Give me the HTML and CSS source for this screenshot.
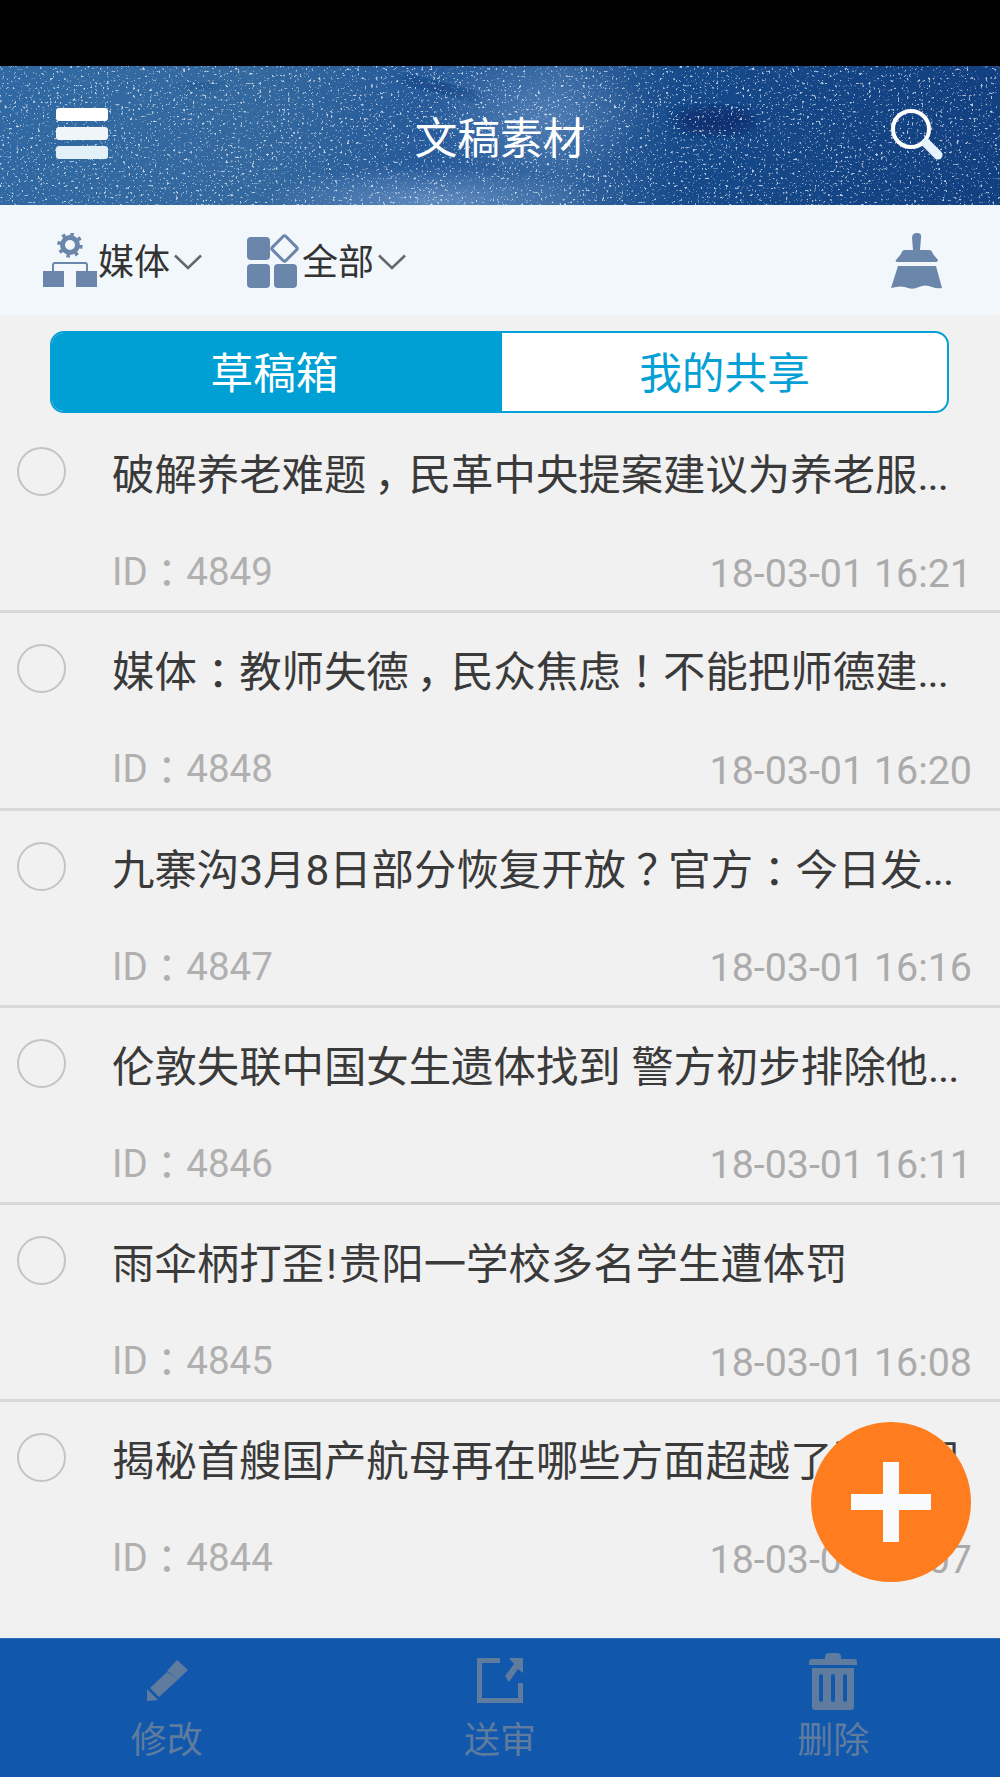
FILE: index.html
```html
<!DOCTYPE html>
<html lang="zh-CN">
<head>
<meta charset="utf-8">
<title>文稿素材</title>
<link rel="stylesheet" href="styles.css">
</head>
<body>
<div class="app">
  <div class="status"></div>
  <header class="header">
    <svg class="sky" width="1000" height="139" aria-hidden="true">
      <defs>
        <filter id="stars" x="0" y="0" width="100%" height="100%">
          <feTurbulence type="fractalNoise" baseFrequency="0.42" numOctaves="2" seed="11"/>
          <feColorMatrix type="matrix" values="0 0 0 0 1  0 0 0 0 1  0 0 0 0 1  4.500 4.500 0 0 -5.250"/>
        </filter>
        <filter id="blur"><feGaussianBlur stdDeviation="6"/></filter>
      </defs>
      <ellipse cx="440" cy="22" rx="42" ry="5" fill="#0e3a78" opacity=".7" filter="url(#blur)" transform="rotate(14 440 22)"/>
      <ellipse cx="715" cy="55" rx="40" ry="14" fill="#0a2c6c" opacity=".8" filter="url(#blur)"/>
      <ellipse cx="200" cy="20" rx="22" ry="3" fill="#0e3a78" opacity=".6" filter="url(#blur)"/>
      <rect width="1000" height="139" filter="url(#stars)" opacity=".7"/>
    </svg>
    <button class="hbtn menu" aria-label="菜单"><i></i><i></i><i></i></button>
    <h1 class="title">文稿素材</h1>
    <button class="hbtn search" aria-label="搜索">
      <svg width="56" height="56" viewBox="0 0 56 56">
        <circle cx="23" cy="21" r="18" fill="none" stroke="#fff" stroke-width="4"/>
        <path d="M38 35 L50 47" stroke="#e6f3fa" stroke-width="9" stroke-linecap="round"/>
      </svg>
    </button>
  </header>

  <div class="toolbar">
    <div class="filter">
      <svg class="ico-media" width="54" height="56" viewBox="0 0 54 56">
        <g fill="none" stroke="#6b86ab">
          <circle cx="27" cy="12" r="7.500" stroke-width="5"/>
          <circle cx="27" cy="12" r="11" stroke-width="3.500" stroke-dasharray="3.500 5.140"/>
          <path d="M10 40 V32 Q10 30 12 30 H42 Q44 30 44 32 V40" stroke-width="2"/>
        </g>
        <path d="M0 38h21v16H0zM33 38h21v16H33z" fill="#6b86ab"/>
      </svg>
      <span class="flabel">媒体</span>
      <svg class="chev" width="28" height="16" viewBox="0 0 28 16"><path d="M1 1.500 L14 14 L27 1.500" fill="none" stroke="#666" stroke-width="2.500"/></svg>
    </div>
    <div class="filter second">
      <svg class="ico-all" width="54" height="56" viewBox="0 0 54 56">
        <g fill="#6b86ab">
          <rect x="0" y="4" width="23" height="23" rx="4"/>
          <rect x="0" y="31" width="23" height="24" rx="4"/>
          <rect x="27" y="31" width="23" height="24" rx="4"/>
        </g>
        <rect x="28" y="6" width="19" height="19" rx="2" transform="rotate(45 37.500 15.500)" fill="none" stroke="#6b86ab" stroke-width="3"/>
      </svg>
      <span class="flabel">全部</span>
      <svg class="chev" width="28" height="16" viewBox="0 0 28 16"><path d="M1 1.500 L14 14 L27 1.500" fill="none" stroke="#666" stroke-width="2.500"/></svg>
    </div>
    <svg class="broom" width="52" height="56" viewBox="0 0 52 56">
      <path fill="#6b86ab" d="M21 5 Q21 0 26 0 Q31 0 30 5 L29 17 H38 Q41 17 42 21 L47 27 Q47 29 45 29 H6 Q4 29 5 27 L10 21 Q11 17 14 17 H22 Z"/>
      <path fill="#6b86ab" d="M7 33 H45 L51 55 Q46 56 41 54 Q34 51 28 54 Q22 57 17 55 Q11 52 0 55 Z"/>
    </svg>
  </div>

  <div class="tabs">
    <div class="tab on">草稿箱</div>
    <div class="tab">我的共享</div>
  </div>

  <main class="list">
    <article class="row">
      <span class="radio"></span>
      <div class="body">
        <div class="rtitle">破解养老难题<span class="pn">，</span>民革中央提案建议为养老服<span class="dots">...</span></div>
        <div class="meta"><span class="id">ID<span class="pn">：</span>4849</span><span class="date">18-03-01 16:21</span></div>
      </div>
    </article>
    <article class="row">
      <span class="radio"></span>
      <div class="body">
        <div class="rtitle">媒体<span class="pn">：</span>教师失德<span class="pn">，</span>民众焦虑<span class="pn">！</span>不能把师德建<span class="dots">...</span></div>
        <div class="meta"><span class="id">ID<span class="pn">：</span>4848</span><span class="date">18-03-01 16:20</span></div>
      </div>
    </article>
    <article class="row">
      <span class="radio"></span>
      <div class="body">
        <div class="rtitle">九寨沟3月8日部分恢复开放<span class="pn">？</span>官方<span class="pn">：</span>今日发<span class="dots">...</span></div>
        <div class="meta"><span class="id">ID<span class="pn">：</span>4847</span><span class="date">18-03-01 16:16</span></div>
      </div>
    </article>
    <article class="row">
      <span class="radio"></span>
      <div class="body">
        <div class="rtitle">伦敦失联中国女生遗体找到 警方初步排除他<span class="dots">...</span></div>
        <div class="meta"><span class="id">ID<span class="pn">：</span>4846</span><span class="date">18-03-01 16:11</span></div>
      </div>
    </article>
    <article class="row">
      <span class="radio"></span>
      <div class="body">
        <div class="rtitle">雨伞柄打歪<span class="bang">!</span>贵阳一学校多名学生遭体罚</div>
        <div class="meta"><span class="id">ID<span class="pn">：</span>4845</span><span class="date">18-03-01 16:08</span></div>
      </div>
    </article>
    <article class="row last">
      <span class="radio"></span>
      <div class="body">
        <div class="rtitle">揭秘首艘国产航母再在哪些方面超越了辽宁舰</div>
        <div class="meta"><span class="id">ID<span class="pn">：</span>4844</span><span class="date">18-03-01 16:07</span></div>
      </div>
    </article>
  </main>

  <button class="fab" aria-label="新建"></button>

  <nav class="bottom">
    <div class="action">
      <svg class="aico" width="52" height="58" viewBox="0 0 52 58">
        <path fill="#5f7b9e" d="M36 8 L47 18 L37.500 27 L26 19 Z M26 20 L37.500 27 L18 45 L9 36 Z M6 37 L17 48 L6 49 Z"/>
      </svg>
      <span>修改</span>
    </div>
    <div class="action">
      <svg class="aico" width="52" height="58" viewBox="2 0 52 58">
        <path fill="none" stroke="#5f7b9e" stroke-width="5" d="M28 8.500 H7.500 V48.500 H48.500 V31"/>
        <path fill="#5f7b9e" d="M51 6 V21 L46 17 L37 30 L33 24 L42 12 L37 6 Z"/>
      </svg>
      <span>送审</span>
    </div>
    <div class="action">
      <svg class="aico" width="52" height="58" viewBox="-2 0 52 58">
        <path fill="#5f7b9e" d="M16 5 Q16 1 20 1 H28 Q32 1 32 5 V7 H45 Q48 7 48 10 V13 H0 V10 Q0 7 3 7 H16 Z"/>
        <path fill="#5f7b9e" fill-rule="evenodd" d="M3 16 H45 V55 Q45 58 42 58 H6 Q3 58 3 55 Z M12 22 Q10 22 10 25 V47 Q10 50 12 50 Q14 50 14 47 V25 Q14 22 12 22 Z M24 22 Q22 22 22 25 V47 Q22 50 24 50 Q26 50 26 47 V25 Q26 22 24 22 Z M36 22 Q34 22 34 25 V47 Q34 50 36 50 Q38 50 38 47 V25 Q38 22 36 22 Z"/>
      </svg>
      <span>删除</span>
    </div>
  </nav>
</div>
</body>
</html>
```

FILE: styles.css
```css
* { box-sizing: border-box; }
html, body { margin: 0; padding: 0; }
body {
  font-family: Roboto, "Noto Sans CJK SC", sans-serif;
  background: #f1f1f1;
}
.app {
  position: relative;
  width: 1000px;
  height: 1777px;
  display: flex;
  flex-direction: column;
  overflow: hidden;
  background: #f1f1f1;
}
.status { height: 66px; background: #000; flex: none; }

.header {
  position: relative;
  flex: none;
  height: 139px;
  padding: 0 62px 0 56px;
  display: flex;
  align-items: center;
  justify-content: space-between;
  background:
    radial-gradient(ellipse 110px 60px at 540px 50px, rgba(120,160,210,.4), rgba(120,160,210,0)),
    radial-gradient(ellipse 170px 35px at 430px 135px, rgba(150,185,225,.5), rgba(150,185,225,0)),
    linear-gradient(90deg, #2f68a2 0%, #34699f 25%, #265a9a 42%, #33659f 56%, #164a8a 68%, #123f80 100%);
}
.sky { position: absolute; left: 0; top: 0; }
.hbtn { position: relative; padding: 0; border: 0; background: none; }
.menu { width: 52px; display: flex; flex-direction: column; gap: 6px; margin-top: -4px; }
.menu i { display: block; height: 13px; border-radius: 3px; background: #fff; }
.menu i:nth-child(2) { background: #f0f5fa; }
.menu i:nth-child(3) { background: #e2f0f8; }
.search { width: 56px; height: 56px; margin-top: 0; margin-right: -6px; }
.title {
  position: absolute;
  left: 0; right: 0;
  top: 48px;
  margin: 0;
  text-align: center;
  color: #fff;
  font-size: 42.67px;
  line-height: 50px;
  font-weight: 400;
}

.toolbar {
  flex: none;
  height: 110px;
  padding: 28px 57px 0 43px;
  display: flex;
  align-items: flex-start;
  background: #f2f7fc;
}
.filter { display: flex; align-items: center; height: 56px; }
.second { margin-left: 45px; }
.flabel { font-size: 36px; line-height: 56px; color: #333; margin: 3px 0 0 1px; }
.chev { margin: 2px 0 0 4px; }
.broom { margin-left: auto; }

.tabs {
  flex: none;
  margin: 16px 51px 0 50px;
  height: 82px;
  display: flex;
  border: 2px solid #05a0d6;
  border-radius: 14px;
  overflow: hidden;
  background: #fff;
}
.tab {
  flex: 1;
  text-align: center;
  font-size: 42.67px;
  line-height: 82px;
  height: 78px;
  color: #05a0d6;
}
.tab.on { flex: none; width: 450px; padding-right: 5px; background: #009fd4; color: #fff; }

.list { flex: 1; padding-top: 3px; }
.row {
  height: 197.3px;
  display: flex;
  padding: 31px 28px 0 17px;
  border-bottom: 3px solid #d9d9d9;
}
.row.last { border-bottom: 0; }
.radio {
  flex: none;
  width: 49px;
  height: 49px;
  border: 2.5px solid #c4c4c4;
  border-radius: 50%;
}
.body { flex: 1; min-width: 0; margin-left: 46px; }
.rtitle {
  margin-top: -1px;
  font-size: 42.4px;
  line-height: 60px;
  color: #3a3a3a;
  white-space: nowrap;
}
.pn {
  display: inline-block;
  width: 1em;
  text-align: center;
  font-feature-settings: "palt";
}
.dots { letter-spacing: -1px; }
.bang { margin: 0 2px; }
.meta {
  margin-top: 37px;
  display: flex;
  justify-content: space-between;
  align-items: center;
  height: 50px;
  font-size: 38.5px;
  color: #b0b0b0;
}
.date { color: #ababab; font-size: 39.4px; margin-top: 10px; }

.fab {
  position: absolute;
  left: 811px;
  top: 1422px;
  width: 160px;
  height: 160px;
  padding: 0;
  border: 0;
  border-radius: 50%;
  background:
    linear-gradient(#f9fafc, #f9fafc) center / 80px 16px no-repeat,
    linear-gradient(#f9fafc, #f9fafc) center / 16px 80px no-repeat,
    #ff7d1f;
}

.bottom {
  flex: none;
  height: 139px;
  display: flex;
  padding: 13px 0 0;
  background: #1158ad;
  border-top: 1px solid #2a6ab8;
}
.action {
  flex: 1;
  display: flex;
  flex-direction: column;
  align-items: center;
  color: #5f7b9e;
  font-size: 36px;
  line-height: 40px;
}
.action span { margin-top: 11px; }
.aico { display: block; }
```
